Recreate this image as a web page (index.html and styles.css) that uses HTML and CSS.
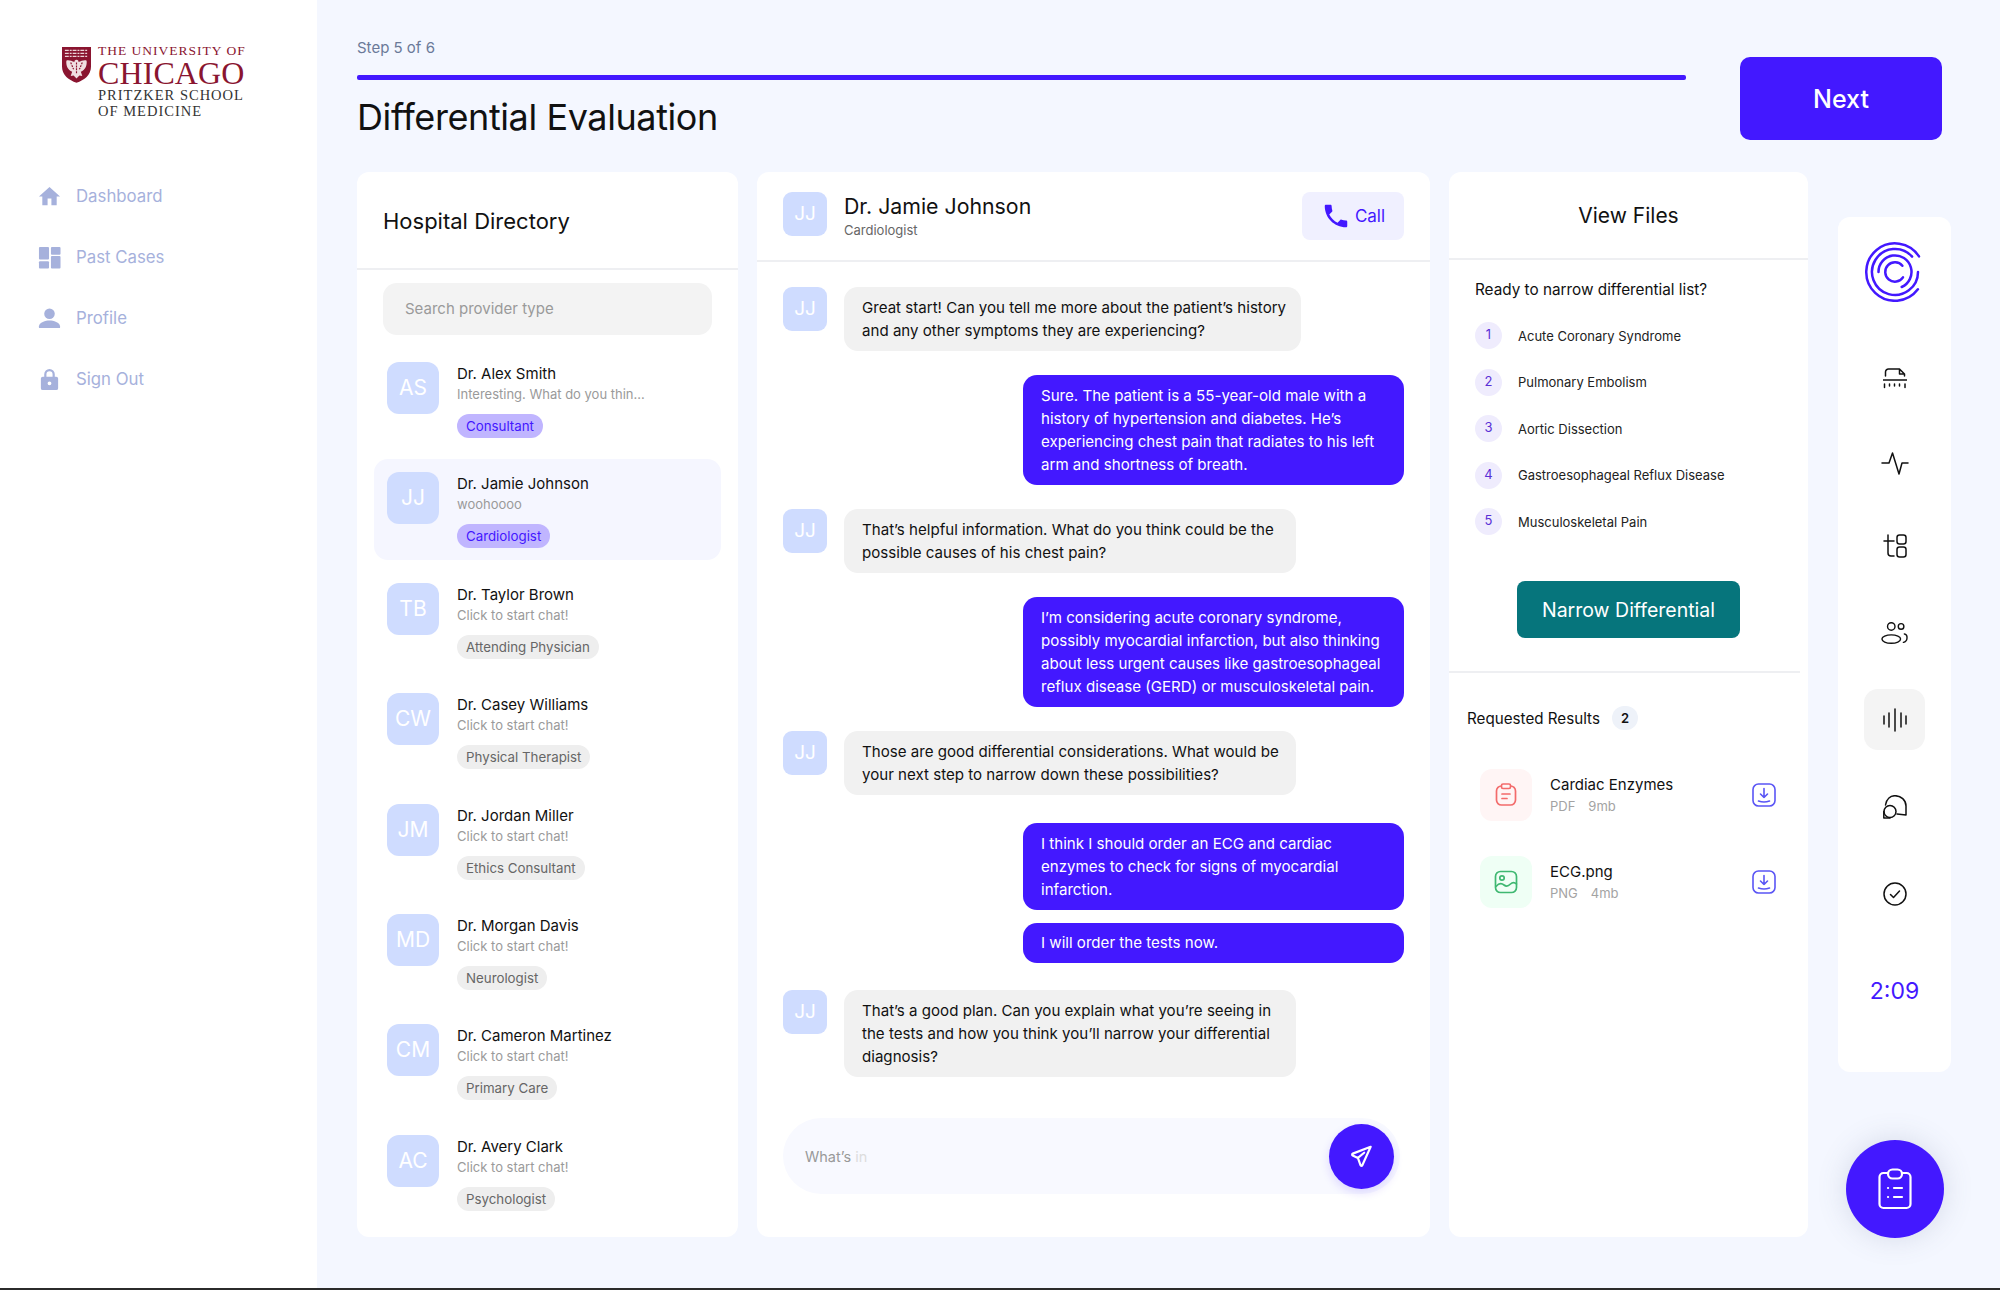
FILE: index.html
```html
<!DOCTYPE html>
<html lang="en">
<head>
    <meta charset="UTF-8">
    <meta name="viewport" content="width=device-width, initial-scale=1.0">
    <title>Differential Evaluation</title>
    <link rel="stylesheet" href="styles.css">
</head>
<body>
    <div class="page">
        <aside class="sidebar">
            <div class="brand">
                <svg class="shield" viewBox="0 0 30 38">
                    <path d="M0 1h30v20c0 9-7 14-15 17C7 35 0 30 0 21z" fill="#8a1530"/>
                    <path d="M3 4.500h24M3 7.500h24M3 10.500h24" stroke="#ecd3d7" stroke-width="1.300" stroke-dasharray="4 1 2 1"/>
                    <path d="M15 14c-1.500 0-2.500 1-2 2.500-3-1-6-2.500-8.500-1.500-.5 5 1.500 9.500 6 11.500L9 31l3-.5 3 3 3-3 3 .5-1.500-4.500c4.500-2 6.500-6.500 6-11.500-2.500-1-5.500.5-8.500 1.500.5-1.500-.5-2.500-2-2.500z" fill="#f0dfe1"/>
                    <path d="M15 17v12M9 17l3 7M21 17l-3 7" stroke="#8a1530" stroke-width="1.200" stroke-dasharray="2 1"/>
                </svg>
                <div class="brand-text">
                    <div class="brand-top">THE UNIVERSITY OF</div>
                    <div class="brand-name">CHICAGO</div>
                    <div class="brand-sub">PRITZKER SCHOOL</div>
                    <div class="brand-sub">OF MEDICINE</div>
                </div>
            </div>
            <nav class="nav">
                <a class="nav-item">
                    <svg viewBox="0 0 24 24"><path d="M10 21v-7h4v7h5.500v-9H23L12 2 1 12h3.500v9z"/></svg>
                    <span>Dashboard</span>
                </a>
                <a class="nav-item">
                    <svg viewBox="0 0 24 24"><rect x="1" y="1" width="10.500" height="13" rx="1"/><rect x="13.500" y="1" width="10" height="8" rx="1"/><rect x="1" y="16" width="10.500" height="7.500" rx="1"/><rect x="13.500" y="10.500" width="10" height="13" rx="1"/></svg>
                    <span>Past Cases</span>
                </a>
                <a class="nav-item">
                    <svg viewBox="0 0 24 24"><circle cx="12" cy="7" r="5.500"/><path d="M1 22v-2c0-4 7-6 11-6s11 2 11 6v2z"/></svg>
                    <span>Profile</span>
                </a>
                <a class="nav-item">
                    <svg viewBox="0 0 24 24"><path d="M19 9h-1.500V6.500a5.500 5.500 0 0 0-11 0V9H5a2 2 0 0 0-2 2v10a2 2 0 0 0 2 2h14a2 2 0 0 0 2-2V11a2 2 0 0 0-2-2zM8.800 6.500a3.200 3.200 0 0 1 6.400 0V9H8.800zM12 18a2 2 0 1 1 0-4 2 2 0 0 1 0 4z"/></svg>
                    <span>Sign Out</span>
                </a>
            </nav>
        </aside>

        <main class="main">
            <header class="topbar">
                <div class="progress-wrap">
                    <p class="step">Step 5 of 6</p>
                    <div class="progress"></div>
                    <h1>Differential Evaluation</h1>
                </div>
                <button class="next">Next</button>
            </header>

            <div class="content">
                <section class="card directory">
                    <h2 class="directory-title">Hospital Directory</h2>
                    <div class="search">Search provider type</div>
                    <ul class="providers">
                        <li class="provider">
                            <div class="avatar">AS</div>
                            <div>
                                <div class="provider-name">Dr. Alex Smith</div>
                                <div class="provider-msg">Interesting. What do you thin...</div>
                                <span class="tag tag-on">Consultant</span>
                            </div>
                        </li>
                        <li class="provider active">
                            <div class="avatar">JJ</div>
                            <div>
                                <div class="provider-name">Dr. Jamie Johnson</div>
                                <div class="provider-msg">woohoooo</div>
                                <span class="tag tag-on">Cardiologist</span>
                            </div>
                        </li>
                        <li class="provider">
                            <div class="avatar">TB</div>
                            <div>
                                <div class="provider-name">Dr. Taylor Brown</div>
                                <div class="provider-msg">Click to start chat!</div>
                                <span class="tag">Attending Physician</span>
                            </div>
                        </li>
                        <li class="provider">
                            <div class="avatar">CW</div>
                            <div>
                                <div class="provider-name">Dr. Casey Williams</div>
                                <div class="provider-msg">Click to start chat!</div>
                                <span class="tag">Physical Therapist</span>
                            </div>
                        </li>
                        <li class="provider">
                            <div class="avatar">JM</div>
                            <div>
                                <div class="provider-name">Dr. Jordan Miller</div>
                                <div class="provider-msg">Click to start chat!</div>
                                <span class="tag">Ethics Consultant</span>
                            </div>
                        </li>
                        <li class="provider">
                            <div class="avatar">MD</div>
                            <div>
                                <div class="provider-name">Dr. Morgan Davis</div>
                                <div class="provider-msg">Click to start chat!</div>
                                <span class="tag">Neurologist</span>
                            </div>
                        </li>
                        <li class="provider">
                            <div class="avatar">CM</div>
                            <div>
                                <div class="provider-name">Dr. Cameron Martinez</div>
                                <div class="provider-msg">Click to start chat!</div>
                                <span class="tag">Primary Care</span>
                            </div>
                        </li>
                        <li class="provider">
                            <div class="avatar">AC</div>
                            <div>
                                <div class="provider-name">Dr. Avery Clark</div>
                                <div class="provider-msg">Click to start chat!</div>
                                <span class="tag">Psychologist</span>
                            </div>
                        </li>
                    </ul>
                </section>

                <section class="card chat">
                    <div class="chat-head">
                        <div class="avatar avatar-small">JJ</div>
                        <div class="chat-who">
                            <div class="chat-name">Dr. Jamie Johnson</div>
                            <div class="chat-role">Cardiologist</div>
                        </div>
                        <button class="call">
                            <svg viewBox="0 0 24 24"><path d="M6.620 10.790c1.440 2.830 3.760 5.140 6.590 6.590l2.200-2.200c.27-.27.67-.36 1.020-.24 1.120.37 2.330.57 3.570.57.55 0 1 .45 1 1V20c0 .55-.45 1-1 1-9.390 0-17-7.610-17-17 0-.55.45-1 1-1h3.500c.55 0 1 .45 1 1 0 1.250.2 2.450.57 3.570.11.35.03.74-.25 1.020l-2.200 2.200z"/></svg>
                            Call
                        </button>
                    </div>
                    <div class="messages">
                        <div class="msg">
                            <div class="avatar avatar-small">JJ</div>
                            <div class="bubble bubble-wide">Great start! Can you tell me more about the patient’s history<br>and any other symptoms they are experiencing?</div>
                        </div>
                        <div class="bubble mine">Sure. The patient is a 55-year-old male with a<br>history of hypertension and diabetes. He’s<br>experiencing chest pain that radiates to his left<br>arm and shortness of breath.</div>
                        <div class="msg">
                            <div class="avatar avatar-small">JJ</div>
                            <div class="bubble">That’s helpful information. What do you think could be the<br>possible causes of his chest pain?</div>
                        </div>
                        <div class="bubble mine">I’m considering acute coronary syndrome,<br>possibly myocardial infarction, but also thinking<br>about less urgent causes like gastroesophageal<br>reflux disease (GERD) or musculoskeletal pain.</div>
                        <div class="msg">
                            <div class="avatar avatar-small">JJ</div>
                            <div class="bubble">Those are good differential considerations. What would be<br>your next step to narrow down these possibilities?</div>
                        </div>
                        <div class="bubble mine mine-first">I think I should order an ECG and cardiac<br>enzymes to check for signs of myocardial<br>infarction.</div>
                        <div class="bubble mine mine-next">I will order the tests now.</div>
                        <div class="msg">
                            <div class="avatar avatar-small">JJ</div>
                            <div class="bubble">That’s a good plan. Can you explain what you’re seeing in<br>the tests and how you think you’ll narrow your differential<br>diagnosis?</div>
                        </div>
                    </div>
                    <div class="composer">
                        <span class="typed">What’s <span class="typed-fade">in</span></span>
                        <button class="send">
                            <svg viewBox="0 0 24 24"><path d="M20 3.500 3.500 9.800c-.8.300-.8 1.300-.1 1.700l4.800 2.300 2.400 6.700c.3.800 1.300.8 1.700 0z M8.200 13.800 14 9"/></svg>
                        </button>
                    </div>
                </section>

                <section class="card files">
                    <h2 class="files-title">View Files</h2>
                    <div class="narrow">
                        <p class="narrow-q">Ready to narrow differential list?</p>
                        <ol class="ddx">
                            <li><span class="num">1</span>Acute Coronary Syndrome</li>
                            <li><span class="num">2</span>Pulmonary Embolism</li>
                            <li><span class="num">3</span>Aortic Dissection</li>
                            <li><span class="num">4</span>Gastroesophageal Reflux Disease</li>
                            <li><span class="num">5</span>Musculoskeletal Pain</li>
                        </ol>
                        <button class="narrow-btn">Narrow Differential</button>
                    </div>
                    <div class="results">
                        <div class="results-head">Requested Results <span class="count">2</span></div>
                        <div class="result">
                            <div class="file-icon file-red">
                                <svg viewBox="0 0 24 24"><rect x="2.500" y="3" width="19" height="19" rx="5"/><rect x="7.500" y="1" width="9" height="4.500" rx="1.500" fill="#fff5f5"/><path d="M8 11h8M8 15.500h5"/></svg>
                            </div>
                            <div class="result-info">
                                <div class="result-name">Cardiac Enzymes</div>
                                <div class="result-meta"><span>PDF</span><span>9mb</span></div>
                            </div>
                            <svg class="download" viewBox="0 0 24 24"><rect x="1" y="1" width="22" height="22" rx="5.500"/><path d="M12 5.500v9M8.500 11l3.500 3.500 3.500-3.500M6.500 18c3.500 1.200 7.500 1.200 11 0"/></svg>
                        </div>
                        <div class="result">
                            <div class="file-icon file-green">
                                <svg viewBox="0 0 24 24"><rect x="1.500" y="1.500" width="21" height="21" rx="5"/><circle cx="8" cy="8" r="2.200"/><path d="M2 16.500c3-3.500 5.500-3.500 8-1.500s4.500 1 6.500-1 4-2 6 0"/></svg>
                            </div>
                            <div class="result-info">
                                <div class="result-name">ECG.png</div>
                                <div class="result-meta"><span>PNG</span><span>4mb</span></div>
                            </div>
                            <svg class="download" viewBox="0 0 24 24"><rect x="1" y="1" width="22" height="22" rx="5.500"/><path d="M12 5.500v9M8.500 11l3.500 3.500 3.500-3.500M6.500 18c3.500 1.200 7.500 1.200 11 0"/></svg>
                        </div>
                    </div>
                </section>

                <div class="side-column">
                    <div class="rail">
                        <svg class="rail-logo" viewBox="0 0 60 60">
                            <path d="M54 14.400A28.700 28.700 0 1 0 52.900 47.300"/>
                            <path d="M47.100 14.600A23 23 0 1 0 53 30"/>
                            <path d="M13.500 30A16.500 16.500 0 1 1 36.700 45"/>
                            <path d="M37.400 23.800A9.700 9.700 0 1 0 38 35.400"/>
                        </svg>
                        <div class="rail-item tight">
                            <svg viewBox="0 0 24 24"><path d="M2.500 8V4a3 3 0 0 1 3-3h11l5 5v2M16.500 1v5h5M0 12h24M1.500 16v3.500M6.500 16v2M11.500 16v2M16.500 16v2M22 16v3.500"/></svg>
                        </div>
                        <div class="rail-item tight">
                            <svg class="icon-wide" viewBox="0 0 26 24"><path d="M0 12h7l3.500-10L17 23l3-11h6"/></svg>
                        </div>
                        <div class="rail-item">
                            <svg viewBox="0 0 24 24"><path d="M5 1v18a3 3 0 0 0 3 3h3M1 7h10"/><rect x="14" y="1" width="9" height="9" rx="2.500"/><rect x="14" y="13" width="9" height="10" rx="2.500"/></svg>
                        </div>
                        <div class="rail-item">
                            <svg class="icon-wide" viewBox="0 0 30 24"><circle cx="11" cy="5" r="4"/><circle cx="21.500" cy="5" r="3"/><ellipse cx="11" cy="18.500" rx="10" ry="4.500"/><path d="M25 13c4 .5 4 8-1 9"/></svg>
                        </div>
                        <div class="rail-item rail-active">
                            <svg viewBox="0 0 24 24"><path d="M1 8v8M6 5v14M12 1v22M18 5v14M23 8v8"/></svg>
                        </div>
                        <div class="rail-item">
                            <svg viewBox="0 0 24 24"><path d="M2.500 10C3.500 4 7.500.7 12 .7 18 .7 23 5 23 11v9l-9-1"/><circle cx="7" cy="16.500" r="6"/><path d="M.8 16.500V23H7"/></svg>
                        </div>
                        <div class="rail-item">
                            <svg viewBox="0 0 24 24"><circle cx="12" cy="12" r="11"/><path d="M7.500 12.500l3 3 6-6.500"/></svg>
                        </div>
                        <div class="timer">2:09</div>
                    </div>
                    <button class="fab">
                        <svg viewBox="0 0 34 42"><rect x="1.500" y="5" width="31" height="35" rx="4"/><rect x="10" y="1.500" width="14" height="9" rx="4.500" fill="#4318ff"/><path d="M10 20h.1M16 20h8M10 29h.1M16 29h8"/></svg>
                    </button>
                </div>
            </div>
        </main>
    </div>
</body>
</html>
```

FILE: styles.css
```css
* {
    margin: 0;
    padding: 0;
    box-sizing: border-box;
}

body {
    font-family: Inter, "Liberation Sans", sans-serif;
    background-color: #f4f7ff;
    color: #111;
}

button {
    font-family: inherit;
    border: none;
}

ul, ol {
    list-style: none;
}

.page {
    display: flex;
    height: 1290px;
    border-bottom: 2px solid #2b2b2b;
    overflow: hidden;
}

/* left nav */
.sidebar {
    width: 317px;
    flex-shrink: 0;
    background-color: white;
    padding: 44px 0 0 38px;
}

.brand {
    display: flex;
    gap: 7px;
    margin-left: 24px;
}

.shield {
    width: 29px;
    height: 37px;
    margin-top: 2px;
}

.brand-text {
    font-family: "Liberation Serif", serif;
    line-height: 1;
    white-space: nowrap;
}

.brand-top {
    font-size: 13.500px;
    letter-spacing: 1px;
    color: #8a1530;
}

.brand-name {
    font-size: 32px;
    letter-spacing: 0.1px;
    line-height: 27px;
    color: #8a1530;
    margin-top: 2px;
}

.brand-sub {
    font-size: 14.500px;
    color: #333;
    letter-spacing: 1px;
    line-height: 16px;
}

.nav {
    margin-top: 47px;
}

.nav-item {
    display: flex;
    align-items: center;
    gap: 15px;
    height: 61px;
    color: #a6b1dc;
    font-size: 16.800px;
}

.nav-item svg {
    width: 23px;
    height: 23px;
    fill: #a6b1dc;
}

/* main area */
.main {
    flex: 1;
    padding: 38px 0 0 40px;
}

.topbar {
    display: flex;
    align-items: flex-start;
    gap: 54px;
    height: 102px;
}

.progress-wrap {
    width: 1329px;
}

.step {
    font-size: 15px;
    color: #6b7a99;
    line-height: 20px;
}

.progress {
    height: 5px;
    background-color: #4318ff;
    border-radius: 2px;
    margin-top: 17px;
}

h1 {
    font-size: 36px;
    font-weight: 440;
    letter-spacing: -0.4px;
    line-height: 44px;
    margin-top: 15px;
}

.next {
    width: 202px;
    height: 83px;
    margin-top: 19px;
    background-color: #4318ff;
    color: white;
    font-size: 25px;
    font-weight: 450;
    border-radius: 10px;
}

.content {
    display: flex;
    gap: 19px;
    margin-top: 32px;
}

.card {
    background-color: white;
    border-radius: 12px;
    height: 1065px;
}

/* directory */
.directory {
    width: 381px;
}

.directory-title {
    height: 98px;
    padding: 35px 0 0 26px;
    font-size: 22px;
    font-weight: 430;
    line-height: 28px;
    border-bottom: 2px solid #eeeff2;
}

.search {
    margin: 13px 26px 0;
    height: 52px;
    line-height: 52px;
    padding-left: 22px;
    background-color: #f3f3f3;
    border-radius: 14px;
    color: #9a9a9a;
    font-size: 15px;
}

.providers {
    margin: 14px 17px 0;
}

.provider {
    display: flex;
    gap: 18px;
    height: 101px;
    margin-bottom: 9.400px;
    padding: 13px 0 0 13px;
    border-radius: 14px;
}

.provider.active {
    background-color: #f5f6ff;
}

.avatar {
    width: 52px;
    height: 52px;
    flex-shrink: 0;
    border-radius: 12px;
    background-color: #cfdcff;
    color: white;
    font-size: 21px;
    text-align: center;
    line-height: 52px;
}

.avatar-small {
    width: 44px;
    height: 44px;
    line-height: 44px;
    font-size: 19px;
    border-radius: 9px;
}

.provider-name {
    font-size: 15px;
    font-weight: 430;
    line-height: 20px;
    margin-top: 2px;
}

.provider-msg {
    font-size: 13px;
    color: #9a9a9a;
    line-height: 20px;
    margin-bottom: 10px;
}

.tag {
    display: inline-block;
    height: 24px;
    line-height: 24px;
    padding: 0 9px;
    border-radius: 12px;
    background-color: #eeeeee;
    color: #666;
    font-size: 13.300px;
}

.tag-on {
    background-color: #c0b5ff;
    color: #4318ff;
}

/* chat */
.chat {
    width: 673px;
    display: flex;
    flex-direction: column;
}

.chat-head {
    display: flex;
    align-items: flex-start;
    height: 90px;
    padding: 20px 26px 0;
    border-bottom: 2px solid #eeeff2;
}

.chat-who {
    flex: 1;
    margin-left: 17px;
}

.chat-name {
    font-size: 21.300px;
    font-weight: 430;
    line-height: 28px;
}

.chat-role {
    font-size: 13px;
    color: #666;
    line-height: 18px;
    margin-top: 1px;
}

.call {
    display: flex;
    align-items: center;
    justify-content: center;
    gap: 4px;
    width: 102px;
    height: 48px;
    border-radius: 8px;
    background-color: #f0f0ff;
    color: #4318ff;
    font-size: 17px;
}

.call svg {
    width: 30px;
    height: 30px;
    fill: #4318ff;
}

.messages {
    padding: 25px 26px 0;
    display: flex;
    flex-direction: column;
    gap: 24px;
}

.msg {
    display: flex;
    gap: 17px;
}

.bubble {
    padding: 9px 17px 9px 18px;
    width: 452px;
    background-color: #f1f1f1;
    border-radius: 14px;
    font-size: 15.100px;
    line-height: 23px;
    white-space: nowrap;
}

.bubble-wide {
    width: 457px;
}

.bubble.mine {
    width: 381px;
    align-self: flex-end;
    background-color: #4318ff;
    color: white;
}

.bubble.mine-first {
    margin-top: 4px;
}

.bubble.mine-next {
    margin-top: -11px;
    margin-bottom: 3px;
    padding-top: 8px;
    padding-bottom: 9px;
}

.composer {
    display: flex;
    align-items: center;
    justify-content: space-between;
    height: 76px;
    margin: auto 30px 43px 26px;
    padding: 0 6px 0 22px;
    background-color: #f8f9ff;
    border-radius: 38px;
    font-size: 14.500px;
}

.typed {
    color: #999;
}

.typed-fade {
    color: #ddd;
}

.send {
    width: 65px;
    height: 65px;
    border-radius: 50%;
    background-color: #4318ff;
    box-shadow: 0 4px 10px rgba(67, 24, 255, 0.15);
    display: flex;
    align-items: center;
    justify-content: center;
}

.send svg {
    width: 26px;
    height: 26px;
    fill: none;
    stroke: white;
    stroke-width: 2;
    stroke-linejoin: round;
    stroke-linecap: round;
}

/* files */
.files {
    width: 359px;
}

.files-title {
    height: 88px;
    padding-top: 30px;
    text-align: center;
    font-size: 21px;
    font-weight: 430;
    line-height: 28px;
    border-bottom: 2px solid #eeeff2;
}

.narrow {
    margin-right: 8px;
    padding: 19px 0 33px 26px;
    border-bottom: 2px solid #eeeff2;
}

.narrow-q {
    font-size: 15.300px;
    line-height: 22px;
}

.ddx {
    margin-top: 21px;
}

.ddx li {
    display: flex;
    align-items: center;
    gap: 16px;
    height: 27px;
    margin-bottom: 19.600px;
    font-size: 13px;
    color: #222;
}

.num {
    width: 27px;
    height: 27px;
    border-radius: 50%;
    background-color: #efecfd;
    color: #5a2fd6;
    text-align: center;
    line-height: 25px;
    font-size: 13px;
}

.narrow-btn {
    display: block;
    width: 223px;
    height: 57px;
    margin: 46px 0 0 42px;
    background-color: #06757c;
    color: white;
    border-radius: 8px;
    font-size: 19.500px;
    font-weight: 430;
}

.results {
    padding: 33px 32px 0 18px;
}

.results-head {
    display: flex;
    align-items: center;
    gap: 12px;
    font-size: 15.200px;
    height: 24px;
    white-space: nowrap;
}

.count {
    width: 26px;
    height: 24px;
    border-radius: 12px;
    background-color: #eef2f9;
    text-align: center;
    line-height: 24px;
    font-size: 13px;
    font-weight: 600;
}

.result {
    display: flex;
    align-items: center;
    height: 52px;
    margin: 0 0 35px 13px;
}

.results-head + .result {
    margin-top: 39px;
}

.file-icon {
    width: 52px;
    height: 52px;
    border-radius: 12px;
    display: flex;
    align-items: center;
    justify-content: center;
}

.file-icon svg {
    width: 24px;
    height: 24px;
    fill: none;
    stroke-width: 1.700;
    stroke-linecap: round;
}

.file-red {
    background-color: #fff5f5;
}

.file-red svg {
    stroke: #f36b6b;
}

.file-green {
    background-color: #effff5;
}

.file-green svg {
    stroke: #3fb871;
}

.result-info {
    flex: 1;
    margin-left: 18px;
}

.result-name {
    font-size: 15px;
    font-weight: 430;
    line-height: 20px;
}

.result-meta {
    display: flex;
    gap: 13px;
    font-size: 13px;
    color: #a3a3a3;
    line-height: 18px;
    margin-top: 2px;
}

.download {
    width: 24px;
    height: 24px;
    fill: none;
    stroke: #5a55f5;
    stroke-width: 1.600;
    stroke-linecap: round;
    stroke-linejoin: round;
}

/* right rail */
.side-column {
    margin-left: 11px;
    width: 113px;
    height: 1065px;
    padding-top: 45px;
    display: flex;
    flex-direction: column;
    align-items: center;
}

.rail {
    width: 113px;
    height: 855px;
    flex-shrink: 0;
    background-color: white;
    border-radius: 12px;
    padding-top: 25px;
    display: flex;
    flex-direction: column;
    align-items: center;
}

.rail-logo {
    width: 60px;
    height: 60px;
    margin-bottom: 47px;
    fill: none;
    stroke: #4318ff;
    stroke-width: 2.500;
    stroke-linecap: round;
}

.rail-item {
    width: 61px;
    height: 61px;
    flex-shrink: 0;
    margin-bottom: 26px;
    border-radius: 14px;
    display: flex;
    align-items: center;
    justify-content: center;
}

.rail-item.tight {
    margin-bottom: 22px;
}

.rail-item svg {
    width: 24px;
    height: 24px;
    fill: none;
    stroke: #111;
    stroke-width: 1.500;
    stroke-linecap: round;
    stroke-linejoin: round;
}

.rail-item svg.icon-wide {
    width: 28px;
}

.rail-active {
    background-color: #f4f4f4;
}

.timer {
    margin-top: 26px;
    color: #4318ff;
    font-size: 23px;
    font-weight: 400;
    line-height: 30px;
}

.fab {
    width: 98px;
    height: 98px;
    flex-shrink: 0;
    margin-top: 68px;
    border-radius: 50%;
    background-color: #4318ff;
    box-shadow: 0 0 30px rgba(80, 90, 130, 0.18);
    display: flex;
    align-items: center;
    justify-content: center;
}

.fab svg {
    width: 34px;
    height: 42px;
    fill: none;
    stroke: white;
    stroke-width: 2.200;
    stroke-linecap: round;
}
```
